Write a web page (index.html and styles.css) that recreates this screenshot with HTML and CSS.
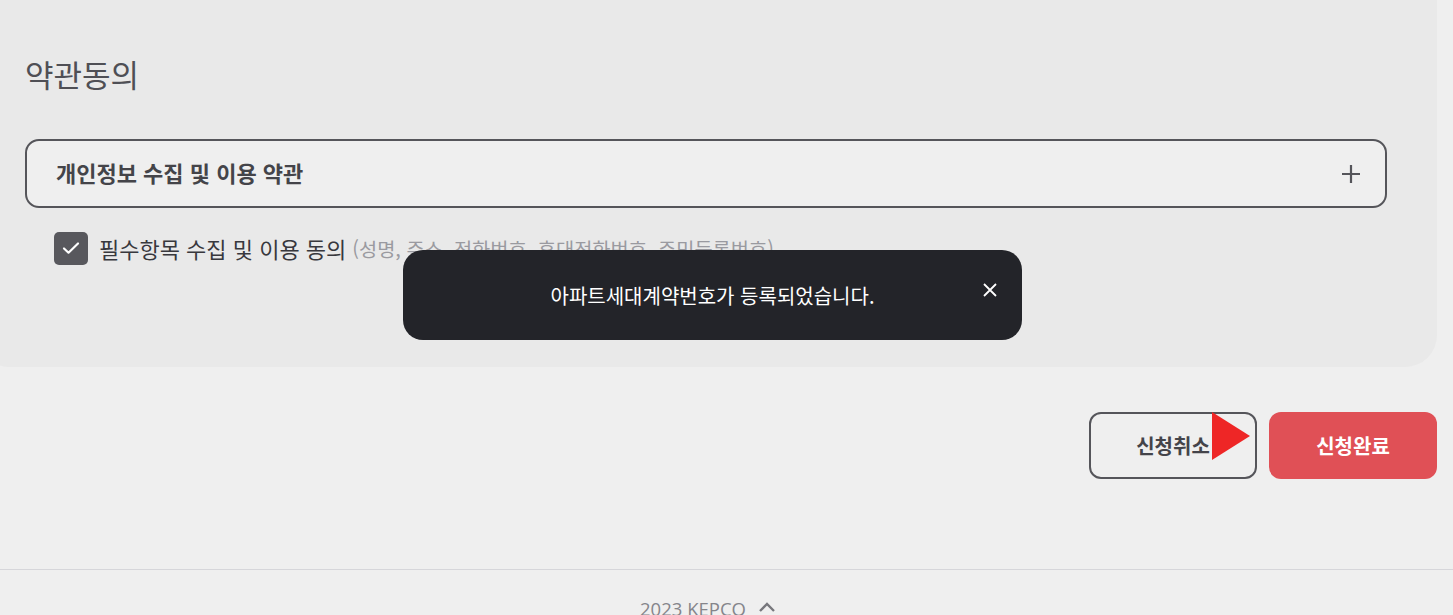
FILE: index.html
```html
<!DOCTYPE html>
<html lang="ko">
<head>
<meta charset="utf-8">
<title>약관동의</title>
<link rel="stylesheet" href="styles.css">
</head>
<body>
<div class="page">
  <section class="panel">
    <h2 class="panel-title">약관동의</h2>
    <div class="accordion">
      <span class="accordion-label">개인정보 수집 및 이용 약관</span>
      <svg class="plus" width="20" height="20" viewBox="0 0 20 20"><path d="M10 1v18M1 10h18" stroke="#55555a" stroke-width="2.2" fill="none"/></svg>
    </div>
    <label class="agree">
      <span class="checkbox"><svg width="18" height="14" viewBox="0 0 18 14"><path d="M2 7.5l4.5 4.2L16 2.5" stroke="#fff" stroke-width="2.2" fill="none" stroke-linecap="round" stroke-linejoin="round"/></svg></span>
      <span class="agree-text">필수항목 수집 및 이용 동의</span>
      <span class="agree-sub">(성명, 주소, 전화번호, 휴대전화번호, 주민등록번호)</span>
    </label>
  </section>
  <div class="actions">
    <button class="btn btn-cancel">신청취소</button>
    <button class="btn btn-submit">신청완료</button>
  </div>
  <footer class="footer">
    <span class="copy">2023 KEPCO</span>
    <svg class="caret" width="18" height="12" viewBox="0 0 18 12"><path d="M2 10l7-7 7 7" stroke="#77777c" stroke-width="2.4" fill="none"/></svg>
  </footer>

  <div class="toast">
    <span class="toast-msg">아파트세대계약번호가 등록되었습니다.</span>
    <svg class="toast-close" width="16" height="16" viewBox="0 0 16 16"><path d="M2 2l12 12M14 2L2 14" stroke="#fff" stroke-width="1.8" fill="none"/></svg>
  </div>
  <svg class="pointer" width="38" height="48" viewBox="0 0 38 48"><polygon points="0,0 38,24 0,48" fill="#ee2626"/></svg>
</div>
</body>
</html>
```

FILE: styles.css
```css
html, body {
  margin: 0;
  padding: 0;
  background: #efefef;
  font-family: "Noto Sans CJK KR", "Noto Sans", sans-serif;
  overflow: hidden;
}
.page {
  position: relative;
  width: 1453px;
  height: 615px;
  overflow: hidden;
}
.panel {
  margin-left: -22px;
  width: 1459px;
  box-sizing: border-box;
  background: #e9e9e9;
  border-radius: 0 0 32px 32px;
  padding: 52px 50px 102px 47px;
}
.panel-title {
  margin: 0;
  font-size: 31px;
  line-height: 44px;
  font-weight: 400;
  color: #4f4f55;
}
.accordion {
  margin-top: 43px;
  height: 69px;
  box-sizing: border-box;
  border: 2px solid #55555a;
  border-radius: 14px;
  background: #efefef;
  display: flex;
  align-items: center;
  justify-content: space-between;
  padding: 0 24px 0 29px;
}
.accordion-label {
  font-size: 22px;
  font-weight: 700;
  color: #444449;
  margin-top: -4px;
}
.plus { display: block; }
.agree {
  margin-top: 23px;
  margin-left: 29px;
  display: flex;
  align-items: center;
  height: 34px;
}
.checkbox {
  width: 34px;
  height: 33px;
  border-radius: 5px;
  background: #58585d;
  display: flex;
  align-items: center;
  justify-content: center;
  margin-right: 11px;
}
.agree-text {
  font-size: 22px;
  color: #38383d;
}
.agree-sub {
  font-size: 19.8px;
  color: #9a9aa0;
  margin-left: 6px;
}
.actions {
  display: flex;
  justify-content: flex-end;
  gap: 12px;
  padding-right: 16px;
  margin-top: 45px;
}
.btn {
  width: 168px;
  height: 67px;
  box-sizing: border-box;
  border-radius: 12px;
  font-family: inherit;
  font-size: 20px;
  font-weight: 700;
  cursor: pointer;
}
.btn-cancel {
  background: #efefef;
  border: 2px solid #55555a;
  color: #44444a;
}
.btn-submit {
  background: #e05056;
  border: none;
  color: #fff;
}
.footer {
  margin-top: 90px;
  border-top: 1px solid #d6d6da;
  display: flex;
  justify-content: center;
  align-items: center;
  gap: 12px;
  padding-top: 24px;
  padding-right: 37px;
}
.copy {
  font-family: "Open Sans", sans-serif;
  font-size: 18.5px;
  line-height: 30px;
  color: #85858b;
}
.caret { display: block; margin-top: -4px; }
.toast {
  position: absolute;
  left: 403px;
  top: 250px;
  width: 619px;
  height: 90px;
  background: #232429;
  border-radius: 20px;
  display: flex;
  align-items: center;
  justify-content: center;
}
.toast-msg {
  color: #fff;
  font-size: 20px;
  margin-top: 0;
}
.toast-close {
  position: absolute;
  right: 24px;
  top: 32px;
}
.pointer {
  position: absolute;
  left: 1212px;
  top: 412px;
}
```
